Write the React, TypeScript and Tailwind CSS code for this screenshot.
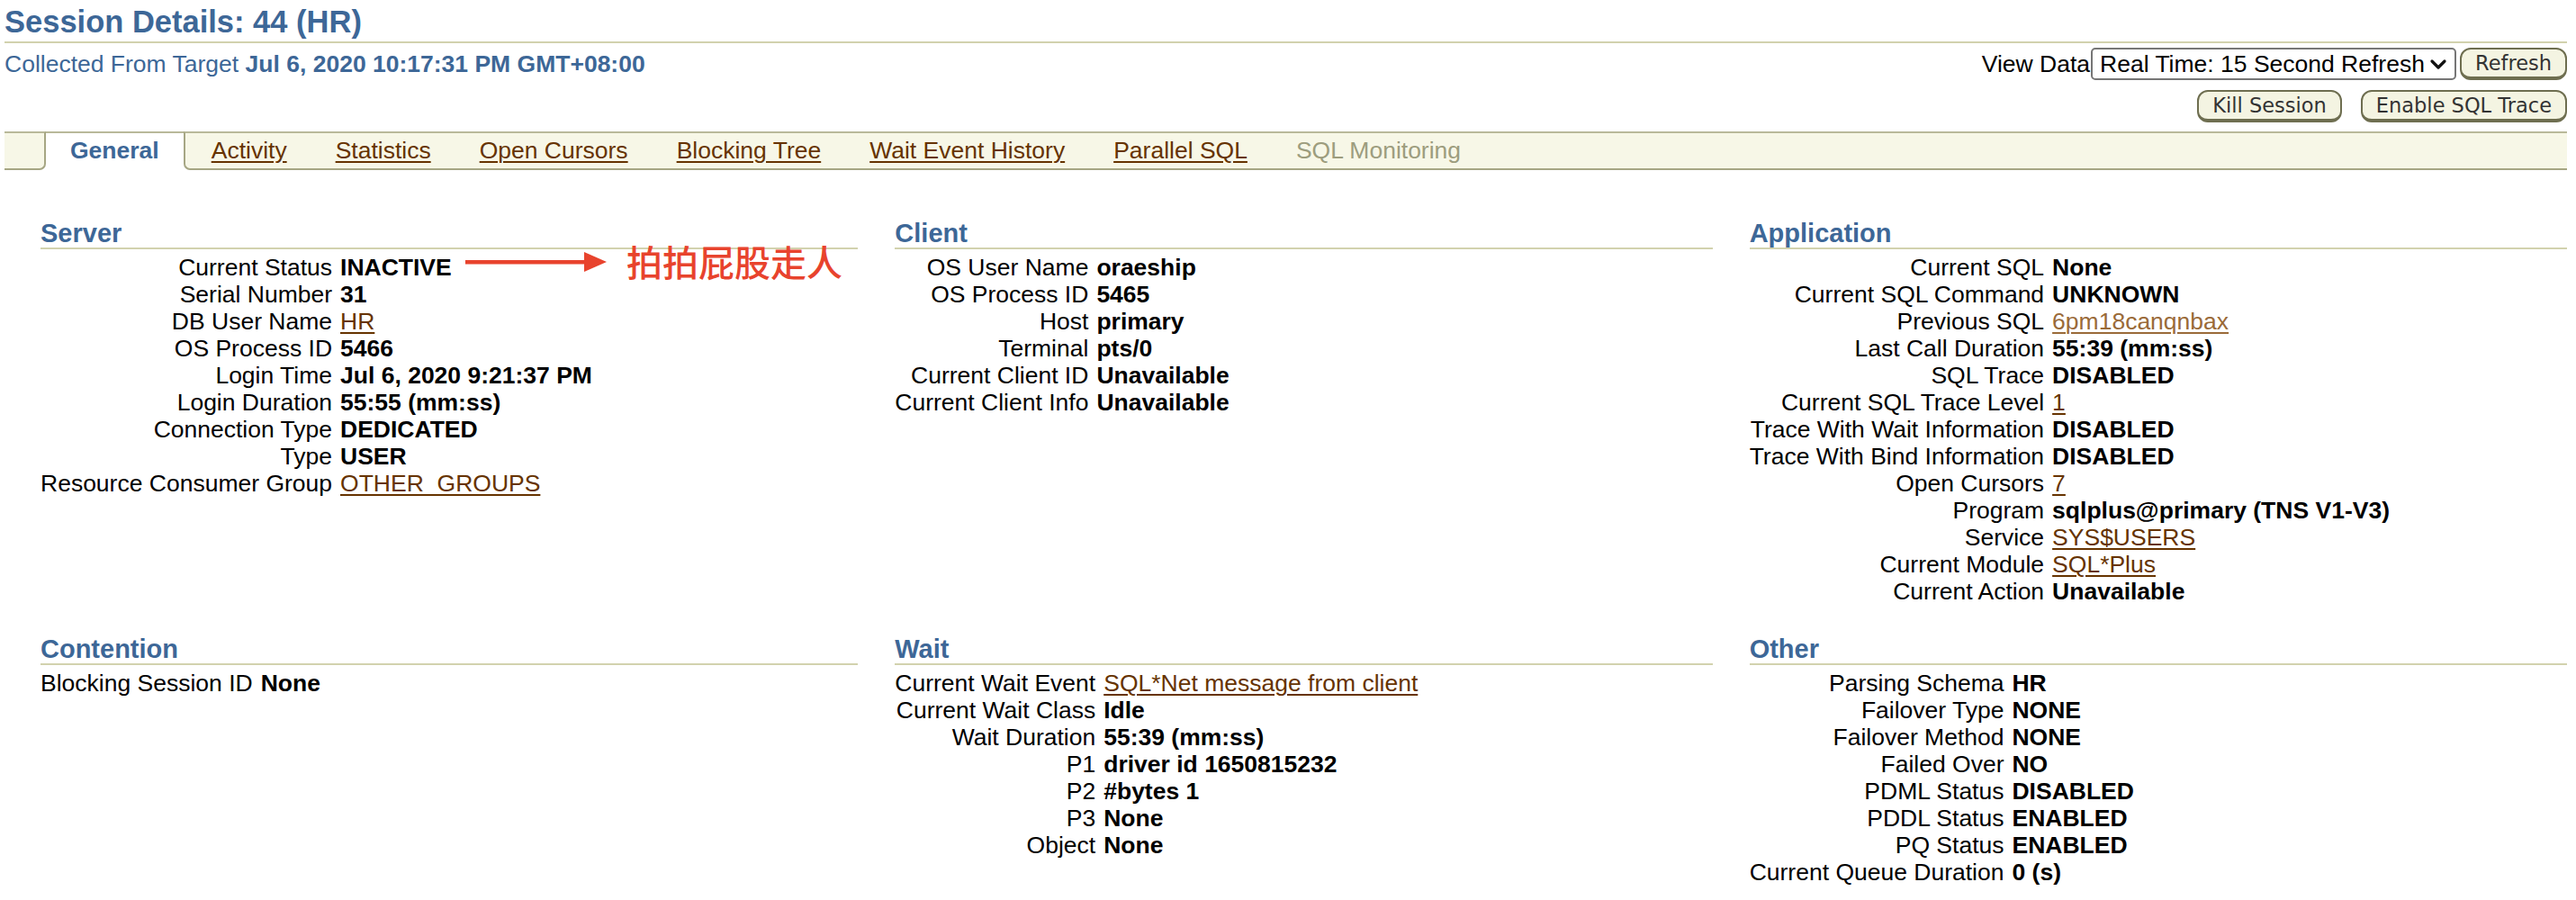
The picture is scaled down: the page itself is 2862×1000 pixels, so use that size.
import React from "react";

type Val = { t: string; link?: boolean; light?: boolean };
type Row = [string, Val];

const v = (t: string): Val => ({ t });
const l = (t: string, light = false): Val => ({ t, link: true, light });

const server: Row[] = [
  ["Current Status", v("INACTIVE")],
  ["Serial Number", v("31")],
  ["DB User Name", l("HR")],
  ["OS Process ID", v("5466")],
  ["Login Time", v("Jul 6, 2020 9:21:37 PM")],
  ["Login Duration", v("55:55 (mm:ss)")],
  ["Connection Type", v("DEDICATED")],
  ["Type", v("USER")],
  ["Resource Consumer Group", l("OTHER_GROUPS")],
];

const client: Row[] = [
  ["OS User Name", v("oraeship")],
  ["OS Process ID", v("5465")],
  ["Host", v("primary")],
  ["Terminal", v("pts/0")],
  ["Current Client ID", v("Unavailable")],
  ["Current Client Info", v("Unavailable")],
];

const application: Row[] = [
  ["Current SQL", v("None")],
  ["Current SQL Command", v("UNKNOWN")],
  ["Previous SQL", l("6pm18canqnbax", true)],
  ["Last Call Duration", v("55:39 (mm:ss)")],
  ["SQL Trace", v("DISABLED")],
  ["Current SQL Trace Level", l("1")],
  ["Trace With Wait Information", v("DISABLED")],
  ["Trace With Bind Information", v("DISABLED")],
  ["Open Cursors", l("7")],
  ["Program", v("sqlplus@primary (TNS V1-V3)")],
  ["Service", l("SYS$USERS")],
  ["Current Module", l("SQL*Plus")],
  ["Current Action", v("Unavailable")],
];

const contention: Row[] = [["Blocking Session ID", v("None")]];

const wait: Row[] = [
  ["Current Wait Event", l("SQL*Net message from client")],
  ["Current Wait Class", v("Idle")],
  ["Wait Duration", v("55:39 (mm:ss)")],
  ["P1", v("driver id 1650815232")],
  ["P2", v("#bytes 1")],
  ["P3", v("None")],
  ["Object", v("None")],
];

const other: Row[] = [
  ["Parsing Schema", v("HR")],
  ["Failover Type", v("NONE")],
  ["Failover Method", v("NONE")],
  ["Failed Over", v("NO")],
  ["PDML Status", v("DISABLED")],
  ["PDDL Status", v("ENABLED")],
  ["PQ Status", v("ENABLED")],
  ["Current Queue Duration", v("0 (s)")],
];

function Section({ title, rows }: { title: string; rows: Row[] }) {
  return (
    <div>
      <h2 className="text-[29px] leading-[32px] font-bold text-[#3d6797] border-b-2 border-[#d2d2ae]">
        {title}
      </h2>
      <table className="mt-[5px] border-collapse">
        <tbody>
          {rows.map(([label, val]) => (
            <tr key={label} className="h-[30px]">
              <td className="text-right pr-[9px] whitespace-nowrap p-0 align-middle text-black">{label}</td>
              <td className="whitespace-nowrap p-0 align-middle">
                {val.link ? (
                  <a
                    className={
                      val.light
                        ? "text-[#9a6a38] underline decoration-2 underline-offset-[3px]"
                        : "text-[#663300] underline decoration-2 underline-offset-[3px]"
                    }
                  >
                    {val.t}
                  </a>
                ) : (
                  <span className="font-bold text-black">{val.t}</span>
                )}
              </td>
            </tr>
          ))}
        </tbody>
      </table>
    </div>
  );
}

function OButton({ children }: { children: React.ReactNode }) {
  return (
    <button className="h-[36px] px-[15px] rounded-[12px] border-2 border-b-[4px] border-[#6e6e50] bg-[#f4f4e2] text-[22.5px] leading-none text-[#333333] font-['DejaVu_Sans',sans-serif] flex items-center">
      {children}
    </button>
  );
}

const tabs = ["Activity", "Statistics", "Open Cursors", "Blocking Tree", "Wait Event History", "Parallel SQL"];

export default function App() {
  return (
    <div className="relative w-[2862px] h-[1000px] bg-white pl-[5px] pr-[10px] font-['Liberation_Sans',Arial,sans-serif] text-[26.5px] leading-[30px] text-black overflow-hidden">
      {/* Title */}
      <h1 className="pt-[5px] pb-[3px] text-[34.5px] leading-[38px] font-bold text-[#3d6797] border-b-2 border-[#d2d2ae]">
        Session Details: 44 (HR)
      </h1>

      {/* Collected / view data */}
      <div className="mt-[5px] h-[36px] flex items-center justify-between">
        <div className="text-[#3d6797]">
          Collected From Target <span className="font-bold">Jul 6, 2020 10:17:31 PM GMT+08:00</span>
        </div>
        <div className="flex items-center">
          <span className="text-black mr-[1px]">View Data</span>
          <div className="w-[406px] h-[36px] border-2 border-[#767676] rounded-[5px] bg-white flex items-center justify-between pl-[8px] pr-[8px]">
            <span className="text-black">Real Time: 15 Second Refresh</span>
            <svg width="20" height="14" viewBox="0 0 20 14" className="mt-[2px]">
              <path d="M3 3 L10 10 L17 3" stroke="#111" strokeWidth="3.2" fill="none" strokeLinecap="round" strokeLinejoin="round" />
            </svg>
          </div>
          <div className="ml-[4px]">
            <OButton>Refresh</OButton>
          </div>
        </div>
      </div>

      {/* Action buttons */}
      <div className="mt-[11px] flex justify-end gap-[21px]">
        <OButton>Kill Session</OButton>
        <OButton>Enable SQL Trace</OButton>
      </div>

      {/* Tabs */}
      <div className="mt-[10px] h-[43px] flex items-stretch">
        <div className="w-[46px] bg-[#f7f7e7] border-t-2 border-b-2 border-r-2 border-[#a6a684] border-t-[#b9b99a] rounded-br-[7px]" />
        <div className="bg-white border-t-2 border-[#b9b99a] px-[27px] pb-[3px] flex items-center font-bold text-[#3d6797]">
          General
        </div>
        <div className="flex-1 bg-[#f7f7e7] border-t-2 border-b-2 border-l-2 border-[#a6a684] border-t-[#b9b99a] rounded-bl-[7px] pb-[2px] flex items-center">
          {tabs.map((t) => (
            <a key={t} className="px-[27px] text-[#663300] underline decoration-2 underline-offset-[3px] first:pl-[29px]">
              {t}
            </a>
          ))}
          <span className="px-[27px] text-[#9d9d7e]">SQL Monitoring</span>
        </div>
      </div>

      {/* Sections */}
      <div className="mt-[54px] pl-[40px] grid grid-cols-3 gap-x-[41px] gap-y-[33px] items-start">
        <Section title="Server" rows={server} />
        <Section title="Client" rows={client} />
        <Section title="Application" rows={application} />
        <Section title="Contention" rows={contention} />
        <Section title="Wait" rows={wait} />
        <Section title="Other" rows={other} />
      </div>

      {/* Annotation overlay */}
      <svg className="absolute left-[517px] top-[279px]" width="158" height="24" viewBox="0 0 158 24">
        <rect x="0" y="10" width="136" height="4.5" fill="#e8432d" />
        <path d="M132 1 L157 12 L132 23 Z" fill="#e8432d" />
      </svg>
      <div className="absolute left-[696px] top-[270px] text-[40px] leading-[40px] text-[#e8432d] font-['Noto_Sans_CJK_SC',sans-serif] font-medium">
        拍拍屁股走人
      </div>
    </div>
  );
}
